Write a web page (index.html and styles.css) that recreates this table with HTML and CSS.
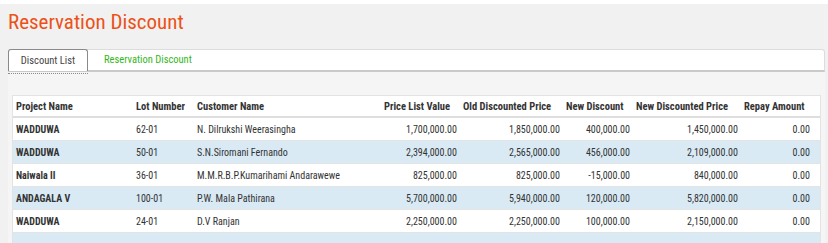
FILE: index.html
```html
<!DOCTYPE html>
<html>
<head>
<meta charset="utf-8">
<link rel="stylesheet" href="styles.css">
</head>
<body>
<div class="topstrip"></div>
<h1 class="title">Reservation Discount</h1>
<div class="panel">
  <div class="tabs">
    <a class="tab active">Discount List</a>
    <a class="tab link">Reservation Discount</a>
  </div>
  <div class="content">
    <div class="tablebox">
      <table class="grid">
        <colgroup>
          <col style="width:120px"><col style="width:61px"><col style="width:187px"><col style="width:79px"><col style="width:103px"><col style="width:70px"><col style="width:108px"><col style="width:80px">
        </colgroup>
        <thead>
          <tr><th>Project Name</th><th>Lot Number</th><th>Customer Name</th><th>Price List Value</th><th>Old Discounted Price</th><th>New Discount</th><th>New Discounted Price</th><th>Repay Amount</th></tr>
        </thead>
        <tbody>
          <tr><td class="b">WADDUWA</td><td>62-01</td><td>N. Dilrukshi Weerasingha</td><td class="n">1,700,000.00</td><td class="n">1,850,000.00</td><td class="n">400,000.00</td><td class="n">1,450,000.00</td><td class="n last">0.00</td></tr>
          <tr class="alt"><td class="b">WADDUWA</td><td>50-01</td><td>S.N.Siromani Fernando</td><td class="n">2,394,000.00</td><td class="n">2,565,000.00</td><td class="n">456,000.00</td><td class="n">2,109,000.00</td><td class="n last">0.00</td></tr>
          <tr><td class="b">Naiwala II</td><td>36-01</td><td>M.M.R.B.P.Kumarihami Andarawewe</td><td class="n">825,000.00</td><td class="n">825,000.00</td><td class="n">-15,000.00</td><td class="n">840,000.00</td><td class="n last">0.00</td></tr>
          <tr class="alt"><td class="b">ANDAGALA V</td><td>100-01</td><td>P.W. Mala Pathirana</td><td class="n">5,700,000.00</td><td class="n">5,940,000.00</td><td class="n">120,000.00</td><td class="n">5,820,000.00</td><td class="n last">0.00</td></tr>
          <tr><td class="b">WADDUWA</td><td>24-01</td><td>D.V Ranjan</td><td class="n">2,250,000.00</td><td class="n">2,250,000.00</td><td class="n">100,000.00</td><td class="n">2,150,000.00</td><td class="n last">0.00</td></tr>
          <tr class="alt"><td class="b">&nbsp;</td><td></td><td></td><td></td><td></td><td></td><td></td><td class="last"></td></tr>
        </tbody>
      </table>
    </div>
  </div>
</div>
</body>
</html>
```
FILE: styles.css
```css
html, body {
  margin: 0;
  padding: 0;
}
body {
  background: #f1f1f1;
  font-family: "Roboto Condensed", "Liberation Sans Narrow", Roboto, sans-serif;
  font-stretch: condensed;
  color: #333;
  width: 828px;
  height: 243px;
  overflow: hidden;
}
.topstrip {
  height: 4px;
  background: #fff;
}
.title {
  margin: 0;
  padding: 4px 0 0 8px;
  height: 40px;
  box-sizing: border-box;
  font-size: 21px;
  font-weight: 400;
  line-height: 28px;
  color: #ec5217;
}
.panel {
  margin: 5px 3px 0 8px;
}
.tabs {
  display: flex;
  height: 20px;
  background: #fff;
  border-top: 1px solid #dcdcdc;
  border-right: 1px solid #dcdcdc;
  border-bottom: 2px solid #c9c9c9;
  border-radius: 3px 3px 0 0;
}
.tab {
  font-size: 10.5px;
  line-height: 20px;
  text-decoration: none;
}
.tab.active {
  width: 80px;
  box-sizing: border-box;
  text-align: center;
  color: #444;
  background: #fff;
  border: 1px solid #8a8a8a;
  border-bottom: none;
  border-radius: 3px 3px 0 0;
  margin-top: -1px;
  height: 22px;
  line-height: 21px;
  position: relative;
}
.tab.active::after {
  content: "";
  position: absolute;
  left: -1px;
  right: -1px;
  bottom: -3px;
  border-bottom: 1px dotted #8a8a8a;
}
.tab.link {
  color: #35b51c;
  padding-left: 16px;
}
.content {
  background: #f5f5f5;
  padding: 23px 4px 0 4px;
  height: 148px;
}
.tablebox {
  background: #fff;
  border: 1px solid #e3e3e3;
  border-bottom: none;
  height: 148px;
  overflow: hidden;
}
.grid {
  border-collapse: collapse;
  table-layout: fixed;
  width: 808px;
  font-size: 10px;
}
.grid th {
  font-weight: 700;
  font-size: 10.5px;
  text-align: left;
  height: 20px;
  padding: 0 0 0 3px;
  border-bottom: 2px solid #dedede;
  white-space: nowrap;
  color: #333;
}
.grid td {
  height: 22px;
  padding: 0 3px;
  border-bottom: 1px solid #e4e4e4;
  white-space: nowrap;
  color: #333;
}
.grid td.b {
  font-weight: 700;
}
.grid td.n {
  text-align: right;
  padding-right: 3px;
}
.grid td.last {
  padding-right: 11px;
}
.grid tr.alt td {
  background: #d9eaf5;
}
```
